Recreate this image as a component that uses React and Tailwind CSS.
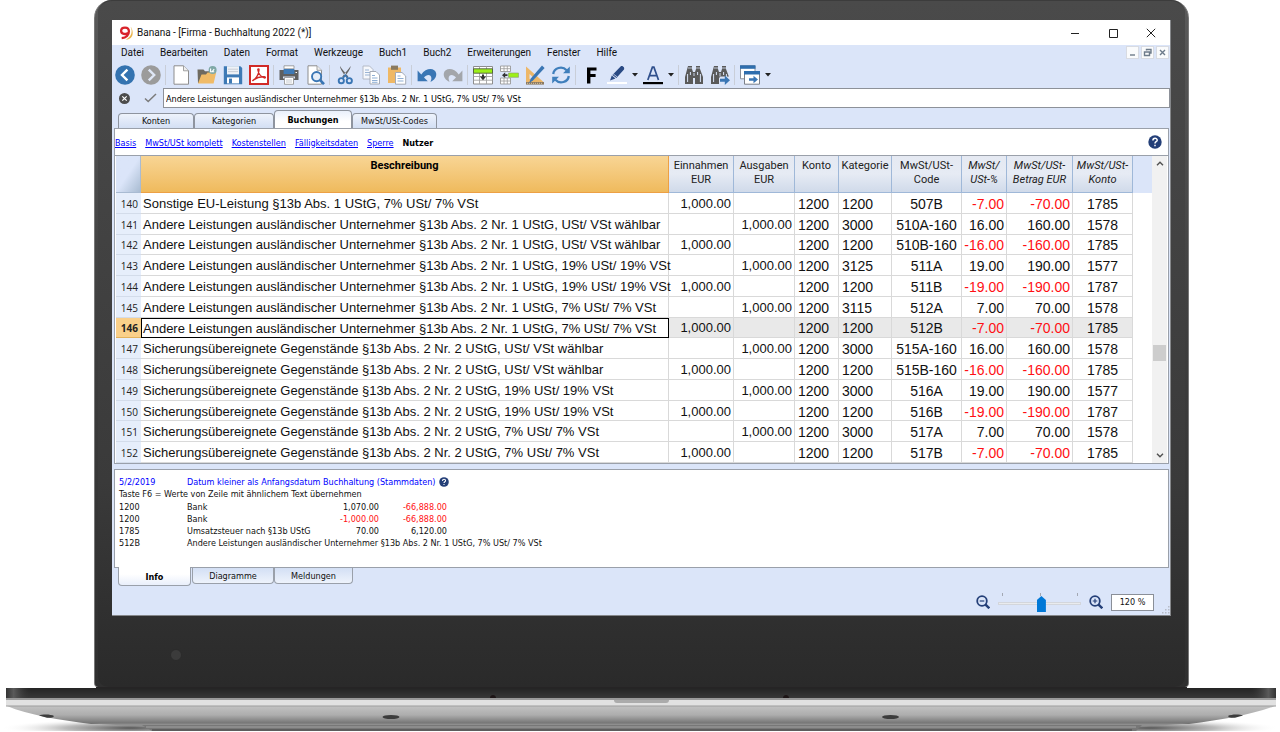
import React from "react";

const HEADERS = [
  { lines: ["Einnahmen", "EUR"] },
  { lines: ["Ausgaben", "EUR"] },
  { lines: ["Konto"] },
  { lines: ["Kategorie"] },
  { lines: ["MwSt/USt-", "Code"] },
  { lines: ["MwSt/", "USt-%"], italic: true },
  { lines: ["MwSt/USt-", "Betrag EUR"], italic: true },
  { lines: ["MwSt/USt-", "Konto"], italic: true },
];

const FOREIGN = "Andere Leistungen ausländischer Unternehmer §13b Abs. 2 Nr. 1 UStG, ";
const SECURED = "Sicherungsübereignete Gegenstände §13b Abs. 2 Nr. 2 UStG, ";

const ROWS = [
  [140, "Sonstige EU-Leistung §13b Abs. 1 UStG, 7% USt/ 7% VSt", "in", "1200", "507B", "-7.00", "-70.00", "1785"],
  [141, FOREIGN + "USt/ VSt wählbar", "out", "3000", "510A-160", "16.00", "160.00", "1578"],
  [142, FOREIGN + "USt/ VSt wählbar", "in", "1200", "510B-160", "-16.00", "-160.00", "1785"],
  [143, FOREIGN + "19% USt/ 19% VSt", "out", "3125", "511A", "19.00", "190.00", "1577"],
  [144, FOREIGN + "19% USt/ 19% VSt", "in", "1200", "511B", "-19.00", "-190.00", "1787"],
  [145, FOREIGN + "7% USt/ 7% VSt", "out", "3115", "512A", "7.00", "70.00", "1578"],
  [146, FOREIGN + "7% USt/ 7% VSt", "in", "1200", "512B", "-7.00", "-70.00", "1785"],
  [147, SECURED + "USt/ VSt wählbar", "out", "3000", "515A-160", "16.00", "160.00", "1578"],
  [148, SECURED + "USt/ VSt wählbar", "in", "1200", "515B-160", "-16.00", "-160.00", "1785"],
  [149, SECURED + "19% USt/ 19% VSt", "out", "3000", "516A", "19.00", "190.00", "1577"],
  [150, SECURED + "19% USt/ 19% VSt", "in", "1200", "516B", "-19.00", "-190.00", "1787"],
  [151, SECURED + "7% USt/ 7% VSt", "out", "3000", "517A", "7.00", "70.00", "1578"],
  [152, SECURED + "7% USt/ 7% VSt", "in", "1200", "517B", "-7.00", "-70.00", "1785"],
];

const SELECTED = 146;

const INFO_ROWS = [
  ["1200", "Bank", "1,070.00", "-66,888.00"],
  ["1200", "Bank", "-1,000.00", "-66,888.00"],
  ["1785", "Umsatzsteuer nach §13b UStG", "70.00", "6,120.00"],
];

const MENUS = ["Datei", "Bearbeiten", "Daten", "Format", "Werkzeuge", "Buch1", "Buch2", "Erweiterungen", "Fenster", "Hilfe"];
const VIEWS = ["Basis", "MwSt/USt komplett", "Kostenstellen", "Fälligkeitsdaten", "Sperre"];

function Icon({ children }) {
  return (
    <svg viewBox="0 0 20 20" className="block size-5" aria-hidden="true">
      {children}
    </svg>
  );
}

function Tool({ label, children }) {
  return (
    <button type="button" aria-label={label} className="block size-5 shrink-0">
      <Icon>{children}</Icon>
    </button>
  );
}

function Sep() {
  return <div className="mx-1 h-5 w-[2px] shrink-0 border-l border-[#c9ced8]" />;
}

function DropArrow({ label, className = "ml-[5px]" }) {
  return (
    <button type="button" aria-label={label} className={"w-[6px] shrink-0 " + className}>
      <svg viewBox="0 0 6 4" className="block h-1 w-[6px]" aria-hidden="true">
        <path d="M0 0h6L3 3.5z" fill="#222" />
      </svg>
    </button>
  );
}

function Group({ children }) {
  return <div className="flex shrink-0 items-center gap-[6px]">{children}</div>;
}

function Binoculars() {
  return (
    <g>
      <path d="M4 1h4v3l1 3v12H1v-7zM12 1h4v3l3 8v7h-8V7l1-3z" fill="#5a5a5a" />
      <path d="M8 7h4v6H8z" fill="#5a5a5a" />
      <path d="M4 3h4M12 3h4" stroke="#dbe5f9" strokeWidth=".8" />
      <path d="M3.6 9v8M6.4 7v3M13.6 7v3M16.4 9v8" stroke="#dbe5f9" strokeWidth="1" />
      <path d="M10 8v3" stroke="#c8d2e6" strokeWidth="1" />
    </g>
  );
}

function Toolbar() {
  return (
    <div className="flex h-[27px] items-center overflow-hidden pl-[3px]">
      <Group>
        <Tool label="Zurück">
          <circle cx="10" cy="10" r="9.8" fill="#3473b0" />
          <path d="M12.4 4.6 7 10l5.4 5.4" fill="none" stroke="#fff" strokeWidth="2.4" />
        </Tool>
        <Tool label="Vorwärts">
          <circle cx="10" cy="10" r="9.8" fill="#9b9b9b" />
          <path d="M7.8 4.6 13.2 10l-5.4 5.4" fill="none" stroke="#dfe7f6" strokeWidth="2.4" />
        </Tool>
      </Group>
      <Sep />
      <Group>
        <Tool label="Neu">
          <path d="M3 .8h9.5l5 5v13.4H3z" fill="#fff" stroke="#8d8d8d" strokeWidth="1" />
          <path d="M12.5.8v5h5" fill="#eee" stroke="#8d8d8d" strokeWidth=".8" />
        </Tool>
        <Tool label="Öffnen">
          <path d="M.5 4.5h6l1.5 1.8h6V18H1z" fill="#6e6a60" />
          <path d="M1 18.6 4.5 9.4H9l1.5-1.8h8.7L16.6 18.6z" fill="#f0bb67" />
          <circle cx="15.6" cy="5" r="4" fill="#7fa8a6" />
          <path d="M13.6 3.4v3.4h3.6M17.2 4.2l-1.8 2.2" stroke="#fff" strokeWidth="1.1" fill="none" />
        </Tool>
        <Tool label="Speichern">
          <path d="M.8 1.2h16.6l1.8 1.8v16.2H.8z" fill="#3d79b5" />
          <path d="M4 1.2h12v8.2H4z" fill="#eef2f7" />
          <path d="M5 4.2h10M5 6.6h10" stroke="#c5cbd3" strokeWidth=".9" />
          <path d="M4 12.4h12v6H4z" fill="#fff" />
          <path d="M6 13.6h3v4.8H6z" fill="#3d79b5" />
        </Tool>
        <Tool label="PDF">
          <path d="M1 1h18v18H1z" fill="#fff" stroke="#d12a27" strokeWidth="2" />
          <path d="M4 15.4c3-1.8 5.6-6 6-10.6.1-1.4-1.4-1.2-1.1.2.6 3.4 3.2 6.8 6.4 7.9 1.4.4 1.5-1 .1-1.100C12 11.500 7.500 12.700 5 14.600c-1 .8-1.600 1.300-1 .8z" fill="none" stroke="#d12a27" strokeWidth="1.4" />
        </Tool>
      </Group>
      <Sep />
      <Group>
        <Tool label="Drucken">
          <path d="M5 .8h10v3H5z" fill="#fff" stroke="#8d8d8d" strokeWidth=".8" />
          <path d="M.5 5h19v10H.5z" fill="#5f5f5f" />
          <path d="M4.6 4h10.8v5H4.6z" fill="#3f7ab6" />
          <path d="M16.5 7.5h1.5" stroke="#fff" strokeWidth="1" />
          <path d="M4 11.5h12v2H4z" fill="#dbe5f9" />
          <path d="M5.5 12.5h9v6.8h-9z" fill="#fff" stroke="#8d8d8d" strokeWidth=".8" />
          <path d="M7 15h6M7 17h6" stroke="#b8bcc4" strokeWidth=".8" />
        </Tool>
        <Tool label="Seitenansicht">
          <path d="M3 .8h9l4.5 4.5v13.900H3z" fill="#fff" stroke="#8d8d8d" strokeWidth="1" />
          <path d="M12 .8v4.5h4.5" fill="#eee" stroke="#8d8d8d" strokeWidth=".8" />
          <circle cx="11.6" cy="11.6" r="4.6" fill="#e6eef8" stroke="#3a76b4" strokeWidth="1.9" />
          <path d="m15 15 4 4.2" stroke="#3a76b4" strokeWidth="2.6" />
        </Tool>
      </Group>
      <Sep />
      <Group>
        <Tool label="Ausschneiden">
          <path d="M5 1c0 3 3 7 6.8 12l1.6-1.2C10 7 6.5 4 5 1zM15.6 1c0 3-3 7-6.8 12l-1.6-1.2C10.6 7 14 4 15.6 1z" fill="#666" />
          <circle cx="6.3" cy="15.7" r="2.6" fill="none" stroke="#3a76b4" strokeWidth="1.9" />
          <circle cx="14.3" cy="15.7" r="2.6" fill="none" stroke="#3a76b4" strokeWidth="1.9" />
          <path d="M7.6 13.6 10.3 10l2.7 3.6" fill="none" stroke="#3a76b4" strokeWidth="1.5" />
        </Tool>
        <Tool label="Kopieren">
          <path d="M2 1h6.5L12 4.5V14H2z" fill="#f6f8fc" stroke="#b4bac6" />
          <path d="M4 5h4M4 7.5h6M4 10h6" stroke="#9ab4d4" />
          <path d="M9 6.5h6l3.5 3.5v9H9z" fill="#fff" stroke="#a4aab6" />
          <path d="M11 10.5h3M11 13h5.5M11 15.500h5.500M11 17.300h5.500" stroke="#8fafd4" />
        </Tool>
        <Tool label="Einfügen">
          <path d="M1 2.5h13V18H1z" fill="#efb865" />
          <path d="M4 .6h7v4.200H4z" fill="#8a7a60" />
          <path d="M8.500 7.500h6.500l3.700 3.500v8.200H8.500z" fill="#fff" stroke="#a4aab6" />
          <path d="M10.500 11h3M10.500 13.500h6M10.500 16h6" stroke="#8fafd4" />
        </Tool>
      </Group>
      <Sep />
      <Group>
        <Tool label="Rückgängig">
          <path d="M.6 5.500v10.700h10.200L7 12.600c2.400-3.400 7.200-3.600 7.400.6 0 1.300-.3 2.400-1 3.600 4-1.600 6.300-4.800 5.800-8.300C18.300 2.600 9 2.300 4.300 9.500z" fill="#3a76b4" />
        </Tool>
        <Tool label="Wiederholen">
          <path d="M19.400 5.500v10.700H9.200l3.800-3.600c-2.400-3.400-7.200-3.600-7.400.6 0 1.300.3 2.400 1 3.600-4-1.600-6.300-4.800-5.800-8.300C1.700 2.600 11 2.300 15.700 9.500z" fill="#a3a6ab" />
        </Tool>
      </Group>
      <Sep />
      <Group>
        <Tool label="Zeilen hinzufügen">
          <path d="M.5 1.500h19v17.500H.5z" fill="#fff" stroke="#8d8d8d" />
          <path d="M.5 11.500h19M.5 15.200h19M6.500 1.500V19M13.500 1.500V19" stroke="#a3a3a3" strokeWidth=".9" />
          <path d="M.5 3.800h19v4.400H.5z" fill="#9cf019" stroke="#4f5b40" strokeWidth=".9" />
          <path d="M9 9.500h2v2h2.200L10 15.200l-3.200-3.700H9z" fill="#333" />
        </Tool>
        <Tool label="Zeile einfügen">
          <path d="M1.500 1h10v5.500h-10zM1.500 13h10v6h-10z" fill="#fff" stroke="#9a9a9a" strokeWidth=".9" />
          <path d="M5 1v5.500M8.300 1v5.500M1.500 3.700h10M5 13v6M8.300 13v6M1.500 16h10" stroke="#9a9a9a" strokeWidth=".8" />
          <path d="M9.500 8h10v4.300h-10z" fill="#9cf019" stroke="#8a9a70" strokeWidth=".6" />
          <path d="M8.500 9.300v1.800H6.200v2L3 10.200 6.200 7.300v2z" fill="#333" />
        </Tool>
        <Tool label="Bearbeiten">
          <path d="M1 1.500 18.500 17H1z" fill="#edb768" />
          <path d="M4.500 9v5h5.500z" fill="#dbe5f9" />
          <path d="M1 17h18v2.600H1z" fill="#8c7a62" />
          <path d="M2 18.300h16" stroke="#d8c8a8" strokeDasharray="1 1" />
          <path d="M17 .6 19.600 3 8 15.400l-4 2.800 1.800-4.600z" fill="#3a76b4" />
        </Tool>
        <Tool label="Aktualisieren">
          <path d="M2.200 9C3 3 11 .2 15.600 5.200M17.800 11c-.8 6-8.800 8.800-13.400 3.800" fill="none" stroke="#3f7fbc" strokeWidth="2.3" />
          <path d="M18.800 1.500v6.800H12zM1.200 18.500v-6.800H8z" fill="#3f7fbc" />
        </Tool>
      </Group>
      <Sep />
      <Group>
        <Tool label="Fett">
          <path d="M6 2.600h9.500v3H9.400v3.300h5.200v3H9.400v6.500H6z" fill="#000" />
        </Tool>
        <Tool label="Hintergrundfarbe">
          <path d="M0 17h20v2H0z" fill="#fff" />
          <path d="M13.600 1.600c1.200-1.600 4.600.8 3.400 2.800L9.400 13l-4-3z" fill="#2a4a84" />
          <path d="m4.800 10.600 3.600 3L3 15.600z" fill="#2a4a84" />
          <path d="m6.300 9 4 3" stroke="#dbe5f9" strokeWidth=".8" />
        </Tool>
      </Group>
      <DropArrow label="Hintergrundfarbe wählen" className="mx-[5px]" />
      <Tool label="Textfarbe">
        <path d="M0 17h20v2.200H0z" fill="#000" />
        <path d="M4.800 15 9.400 2.200h1.500L15.500 15M6.800 10.600h6.700" fill="none" stroke="#2f4f8c" strokeWidth="1.7" />
      </Tool>
      <DropArrow label="Textfarbe wählen" />
      <Sep />
      <Group>
        <Tool label="Suchen">
          <Binoculars />
        </Tool>
        <Tool label="Weitersuchen">
          <Binoculars />
          <path d="M9.500 11.500h10.500v8.500H9.500z" fill="#dbe5f9" />
          <path d="M10 13.800h4.800v-3.400l5.200 4.800-5.200 4.800v-3.200H10z" fill="#3a76b4" />
        </Tool>
      </Group>
      <Sep />
      <Tool label="Fenster wechseln">
        <path d="M.5.8h14.500v13H.5z" fill="#fff" stroke="#8a8f98" />
        <path d="M0 .3h15.500v3.500H0z" fill="#2f6eae" />
        <path d="M4.500 6.800h15v12.400h-15z" fill="#fff" stroke="#7a7f88" />
        <path d="M4 6h16v3.500H4z" fill="#2f6eae" />
        <path d="M9 13.300h4.500v-2.500l4.500 3.700-4.500 3.700v-2.500H9z" fill="#3a76b4" />
      </Tool>
      <DropArrow label="Fensterliste" />
    </div>
  );
}

function Help({ className }) {
  return (
    <button type="button" aria-label="Hilfe" className={className}>
      <svg viewBox="0 0 14 14" className="block size-full" aria-hidden="true">
        <circle cx="7" cy="7" r="6.7" fill="#243f78" />
        <path d="M4.900 5.500c0-3 4.300-2.900 4.300-.3C9.200 6.700 7 6.700 7 8.400M7 9.700v1.500" fill="none" stroke="#fff" strokeWidth="1.5" />
      </svg>
    </button>
  );
}

const CHILD_CONTROLS = [
  ["Fenster minimieren", "M3 8h5"],
  ["Fenster wiederherstellen", "M4.500 3.500v-1h4.500v3.500H8M2.500 5h5v3.500h-5z"],
  ["Fenster schließen", "m3 3 5 5m0-5-5 5"],
];

function Chrome() {
  return (
    <>
      <div className="flex h-[25px] items-center bg-white pl-[7px] font-[Roboto,sans-serif] text-[10px] text-[#111]">
        <svg viewBox="0 0 14 14" className="mr-1 block size-[14px]" aria-hidden="true">
          <path d="M11.500.8c2.200 4 1.600 9.800-4.700 12.700 3.400.5 7-1.900 6.900-6.700-.1-2.700-.9-4.900-2.200-6z" fill="#e9b54d" />
          <path d="M8.900 6.800c-2 1.900-6.700 1.600-6.800-1.900C2.200.6 9.800.3 9.900 5.200c.1 3.600-2.600 6.600-7.200 7" fill="none" stroke="#d8232a" strokeWidth="2.3" />
        </svg>
        <h1 className="grow">Banana - [Firma - Buchhaltung 2022 (*)]</h1>
        <div className="flex items-center gap-7 pr-[14px]">
          <button type="button" aria-label="Minimieren" className="size-[10px]">
            <svg viewBox="0 0 10 10" className="block" aria-hidden="true"><path d="M1 5.500h8" stroke="#222" /></svg>
          </button>
          <button type="button" aria-label="Maximieren" className="size-[10px]">
            <svg viewBox="0 0 10 10" className="block" aria-hidden="true"><path d="M1.500 1.500h8v8h-8z" fill="none" stroke="#222" /></svg>
          </button>
          <button type="button" aria-label="Schließen" className="size-[10px]">
            <svg viewBox="0 0 10 10" className="block" aria-hidden="true"><path d="m.8.8 8.400 8.400M9.200.8.800 9.200" stroke="#222" /></svg>
          </button>
        </div>
      </div>
      <div className="flex h-4 items-start justify-between pr-px pl-[9px]">
        <nav className="flex gap-4 font-[Roboto,sans-serif] text-[10px] leading-4 text-[#111]" aria-label="Menü">
          {MENUS.map((m) => (
            <button type="button" key={m}>{m}</button>
          ))}
        </nav>
        <div className="flex gap-[2px] pt-px">
          {CHILD_CONTROLS.map(([label, d]) => (
            <button type="button" key={label} aria-label={label} className="size-[13px] border border-[#d8dbe2] bg-[#fafbfc]">
              <svg viewBox="0 0 11 11" className="block size-[11px]" aria-hidden="true">
                <path d={d} fill="none" stroke="#6d7b8a" strokeWidth="1.4" />
              </svg>
            </button>
          ))}
        </div>
      </div>
      <Toolbar />
      <div className="flex h-5 items-center">
        <button type="button" aria-label="Abbrechen" className="ml-[7px] size-[11px]">
          <svg viewBox="0 0 11 11" className="block" aria-hidden="true">
            <circle cx="5.5" cy="5.5" r="5.5" fill="#4c4c4c" />
            <path d="m3.300 3.300 4.400 4.400m0-4.400L3.300 7.700" stroke="#fff" strokeWidth="1.2" />
          </svg>
        </button>
        <button type="button" aria-label="Übernehmen" className="ml-[14px] h-[10px] w-[13px]">
          <svg viewBox="0 0 13 10" className="block" aria-hidden="true">
            <path d="m1 5.500 3.200 3L12 1" fill="none" stroke="#7b7b7b" strokeWidth="1.5" />
          </svg>
        </button>
        <input
          aria-label="Zelleninhalt"
          defaultValue={FOREIGN + "7% USt/ 7% VSt"}
          className="ml-[6px] h-5 min-w-0 grow border border-[#8d9199] bg-white px-[2px] pt-px text-[9px] text-black outline-none"
        />
      </div>
    </>
  );
}

function Tabs() {
  const idle = "h-[15px] rounded-t-[4px] border border-b-0 border-[#8e949f] bg-gradient-to-b from-[#eef3fc] to-[#d3dff4]";
  return (
    <div className="flex h-5 items-end pl-[6px] text-[9px] leading-[14px] text-[#111]" role="tablist">
      <button type="button" role="tab" className={idle + " w-[76px]"}>Konten</button>
      <button type="button" role="tab" className={idle + " w-20"}>Kategorien</button>
      <button type="button" role="tab" aria-selected="true" className="h-[18px] w-[78px] rounded-t-[4px] border border-b-0 border-[#8e949f] bg-gradient-to-b from-[#e9effb] to-white to-60% font-bold text-black">
        Buchungen
      </button>
      <button type="button" role="tab" className={idle + " w-[85px]"}>MwSt/USt-Codes</button>
    </div>
  );
}

const numberClass = (value) => (value.startsWith("-") ? "text-[#ff0f14]" : "");

function Ledger() {
  return (
    <div className="flex border-t border-[#9aa0aa] pl-px">
      <table className="h-[307px] w-[1017px] table-fixed border-separate border-spacing-0 font-['Liberation_Sans',Arial,sans-serif] text-[14px] leading-4 text-[#111]">
        <colgroup>
          <col className="w-[25px]" />
          <col />
          <col className="w-[65px]" />
          <col className="w-[61px]" />
          <col className="w-[44px]" />
          <col className="w-[53px]" />
          <col className="w-[70px]" />
          <col className="w-[45px]" />
          <col className="w-[66px]" />
          <col className="w-[60px]" />
        </colgroup>
        <thead>
          <tr className="h-[37px] font-[Roboto,sans-serif] text-[11px] leading-[14px]">
            <td className="border-r border-b border-[#a9bbd2] bg-gradient-to-br from-[#dbe5f9] from-50% to-[#a9bcd2] p-0" />
            <th className="border-r border-b border-[#eda044] bg-gradient-to-b from-[#f8d594] to-[#efba5c] p-0 pt-[3px] align-top font-bold text-black">
              Beschreibung
            </th>
            {HEADERS.map((h, i) => (
              <th
                key={i}
                className={
                  "border-r border-b border-[#9fb8d8] bg-gradient-to-b from-[#e5e9f2] via-[#e6ebf4] to-[#d0daea] p-0 pt-[3px] align-top font-normal whitespace-nowrap text-[#222] " +
                  (h.italic ? "italic" : "")
                }
              >
                {h.lines.map((l) => (
                  <div key={l}>{l}</div>
                ))}
              </th>
            ))}
          </tr>
        </thead>
        <tbody>
          {ROWS.map(([no, text, side, category, code, rate, amount, account]) => {
            const on = no === SELECTED;
            const cell = "border-r border-b border-[#d9d9d9] pt-[2px] pb-0 whitespace-nowrap " + (on ? "bg-[#e9e9e9]" : "bg-white");
            return (
              <tr key={no} aria-selected={on}>
                <th
                  scope="row"
                  className={
                    "border-b p-0 pt-[2px] pr-[3px] text-right font-['Open_Sans',sans-serif] text-[10px] text-[#222] " +
                    (on ? "border-[#e3b25c] bg-[#fad08a] font-bold" : "border-[#d3dcea] bg-[#e6eefb] font-normal")
                  }
                >
                  {no}
                </th>
                <td
                  className={
                    "pt-[2px] pb-0 pl-[2px] text-[13px] whitespace-nowrap " +
                    (on ? "bg-white outline outline-1 -outline-offset-1 outline-black" : "border-r border-b border-[#d9d9d9] bg-white")
                  }
                >
                  {text}
                </td>
                <td className={cell + " pr-[2px] text-right text-[13px]"}>{side === "in" ? "1,000.00" : ""}</td>
                <td className={cell + " pr-[2px] text-right text-[13px]"}>{side === "out" ? "1,000.00" : ""}</td>
                <td className={cell + " pl-[3px]"}>1200</td>
                <td className={cell + " pl-[3px]"}>{category}</td>
                <td className={cell + " px-0 text-center"}>{code}</td>
                <td className={cell + " pr-[2px] text-right " + numberClass(rate)}>{rate}</td>
                <td className={cell + " pr-[2px] text-right " + numberClass(amount)}>{amount}</td>
                <td className={cell + " px-0 text-center"}>{account}</td>
              </tr>
            );
          })}
        </tbody>
      </table>
      <div className="grow">
        <div className="h-[37px] bg-[#dbe5f9]" />
      </div>
      <div className="mr-px flex w-[15px] flex-col items-center justify-between bg-[#f1f1f1]">
        <button type="button" aria-label="Nach oben" className="flex h-[15px] w-full items-center justify-center">
          <svg viewBox="0 0 8 5" className="h-[5px] w-2" aria-hidden="true"><path d="m1 4.300 3-3 3 3" fill="none" stroke="#505050" strokeWidth="1.4" /></svg>
        </button>
        <div className="flex w-full grow flex-col items-center">
          <div className="grow-[174]" />
          <div className="h-4 w-[13px] bg-[#cdcdcd]" />
          <div className="grow-[87]" />
        </div>
        <button type="button" aria-label="Nach unten" className="flex h-[15px] w-full items-center justify-center">
          <svg viewBox="0 0 8 5" className="h-[5px] w-2" aria-hidden="true"><path d="m1 .7 3 3 3-3" fill="none" stroke="#505050" strokeWidth="1.4" /></svg>
        </button>
      </div>
    </div>
  );
}

function InfoPanel() {
  return (
    <section className="mt-[5px] mr-px ml-[2px] h-[99px] border border-[#9aa0aa] bg-white pt-[5px] pl-1 text-[9px] leading-3 text-[#111]">
      <div className="flex h-[13px] items-center text-[#0000ff]">
        <span className="w-[68px]">5/2/2019</span>
        <span>Datum kleiner als Anfangsdatum Buchhaltung (Stammdaten)</span>
        <Help className="ml-[3px] size-[10px]" />
      </div>
      <p className="h-[13px]">Taste F6 = Werte von Zeile mit ähnlichem Text übernehmen</p>
      <table className="table-fixed border-collapse text-left">
        <colgroup>
          <col className="w-[68px]" />
          <col className="w-[124px]" />
          <col className="w-[68px]" />
          <col className="w-[68px]" />
          <col className="w-[100px]" />
        </colgroup>
        <tbody>
          {INFO_ROWS.map((r, i) => (
            <tr key={i}>
              <td className="p-0">{r[0]}</td>
              <td className="p-0 whitespace-nowrap">{r[1]}</td>
              <td className={"p-0 text-right " + numberClass(r[2])}>{r[2]}</td>
              <td className={"p-0 text-right " + numberClass(r[3])}>{r[3]}</td>
            </tr>
          ))}
          <tr>
            <td className="p-0">512B</td>
            <td className="p-0 whitespace-nowrap" colSpan={4}>{FOREIGN}7% USt/ 7% VSt</td>
          </tr>
        </tbody>
      </table>
    </section>
  );
}

function Footer() {
  const idle = "h-4 rounded-b-[4px] border border-t-0 border-[#9aa0aa] bg-gradient-to-b from-[#d3dff4] to-[#eef3fc]";
  return (
    <footer className="flex h-[47px] flex-col justify-between text-[9px] leading-[14px] text-[#111]">
      <div className="flex items-start pl-[6px]" role="tablist">
        <button type="button" role="tab" aria-selected="true" className="-mt-px h-[19px] w-[73px] rounded-b-[4px] border border-t-0 border-[#9aa0aa] bg-gradient-to-t from-[#e9effb] to-white to-60% pt-px font-bold text-black">
          Info
        </button>
        <button type="button" role="tab" className={idle + " ml-px w-[82px]"}>Diagramme</button>
        <button type="button" role="tab" className={idle + " w-[79px]"}>Meldungen</button>
      </div>
      <div className="flex items-center justify-end pb-px">
        <button type="button" aria-label="Verkleinern" className="size-[14px]">
          <svg viewBox="0 0 14 14" className="block" aria-hidden="true">
            <circle cx="6" cy="6" r="4.8" fill="none" stroke="#243f78" strokeWidth="1.8" />
            <path d="M3.700 6h4.600" stroke="#243f78" strokeWidth="1.2" />
            <path d="m9.300 9.300 4 4" stroke="#243f78" strokeWidth="2.4" />
          </svg>
        </button>
        <div className="mx-2 flex w-[83px] flex-col">
          <div className="flex h-[3px] justify-between pr-[3px] pl-1">
            <span className="w-px bg-[#a3a8b3]" />
            <span className="w-px bg-[#a3a8b3]" />
            <span className="w-px bg-[#a3a8b3]" />
          </div>
          <input
            type="range"
            aria-label="Zoom"
            min="20"
            max="210"
            defaultValue="120"
            className="h-4 w-full appearance-none bg-transparent [&::-webkit-slider-runnable-track]:h-[3px] [&::-webkit-slider-runnable-track]:border [&::-webkit-slider-runnable-track]:border-[#d3d6dc] [&::-webkit-slider-runnable-track]:bg-[#e9ebee] [&::-webkit-slider-thumb]:-mt-[7px] [&::-webkit-slider-thumb]:h-4 [&::-webkit-slider-thumb]:w-[9px] [&::-webkit-slider-thumb]:appearance-none [&::-webkit-slider-thumb]:bg-[#0078d7] [&::-webkit-slider-thumb]:[clip-path:polygon(50%_0,100%_25%,100%_100%,0_100%,0_25%)]"
          />
        </div>
        <button type="button" aria-label="Vergrößern" className="size-[14px]">
          <svg viewBox="0 0 14 14" className="block" aria-hidden="true">
            <circle cx="6" cy="6" r="4.8" fill="none" stroke="#243f78" strokeWidth="1.8" />
            <path d="M3.700 6h4.600M6 3.700v4.600" stroke="#243f78" strokeWidth="1.2" />
            <path d="m9.300 9.300 4 4" stroke="#243f78" strokeWidth="2.4" />
          </svg>
        </button>
        <input aria-label="Zoomfaktor" defaultValue="120 %" className="ml-2 h-[17px] w-[43px] border border-[#8a8f98] bg-white text-center text-[9px] outline-none" />
        <svg viewBox="0 0 8 8" className="mt-4 ml-2 size-2" aria-hidden="true">
          <path d="M6 0h1.500v1.500H6zM3 3h1.500v1.500H3zM6 3h1.500v1.500H6zM0 6h1.500v1.500H0zM3 6h1.500v1.500H3zM6 6h1.500v1.500H6z" fill="#b7bcc7" />
        </svg>
      </div>
    </footer>
  );
}

function LaptopBase() {
  return (
    <svg viewBox="0 0 1280 45" preserveAspectRatio="none" className="block h-[45px] w-full" aria-hidden="true">
      <defs>
        <linearGradient id="deck" x1="0" y1="0" x2="0" y2="1">
          <stop offset="0" stopColor="#242424" />
          <stop offset="1" stopColor="#3a3a3a" />
        </linearGradient>
        <linearGradient id="deckEdge" x1="0" y1="0" x2="1" y2="0">
          <stop offset="0" stopColor="#333" />
          <stop offset=".006" stopColor="#5a5a5a" />
          <stop offset=".02" stopColor="#333" stopOpacity="0" />
          <stop offset=".98" stopColor="#333" stopOpacity="0" />
          <stop offset=".994" stopColor="#5a5a5a" />
          <stop offset="1" stopColor="#333" />
        </linearGradient>
        <linearGradient id="belly" x1="0" y1="0" x2="0" y2="1">
          <stop offset="0" stopColor="#c2c2c2" />
          <stop offset=".5" stopColor="#adadad" />
          <stop offset="1" stopColor="#6f6f6f" />
        </linearGradient>
        <radialGradient id="shade">
          <stop offset="0" stopColor="#444" stopOpacity=".9" />
          <stop offset=".5" stopColor="#777" stopOpacity=".5" />
          <stop offset="1" stopColor="#fff" stopOpacity="0" />
        </radialGradient>
      </defs>
      <ellipse cx="130" cy="41" rx="130" ry="9" fill="url(#shade)" />
      <ellipse cx="1150" cy="41" rx="130" ry="9" fill="url(#shade)" />
      <path d="M0 44h1280v1H0z" fill="#fff" />
      <path d="M96 0h1091v2H96z" fill="#262425" />
      <path d="M6 1h1270v11H6z" fill="url(#deck)" />
      <path d="M6 1h1270v11H6z" fill="url(#deckEdge)" />
      <path d="M7 19h1268c-24 9-54 14-86 18H91C60 33 28 28 7 19z" fill="url(#belly)" />
      <path d="M91 36.500h1098l-45 3H142z" fill="#8e8e8e" />
      <path d="M142 38h1000l-6 6H152z" fill="#777" />
      <path d="M146 40h990" stroke="#a2a2a2" />
      <path d="M152 43h980" stroke="#555" strokeWidth="1.4" />
      <path d="M6 11h1270v2H6z" fill="#9a9a9a" />
      <path d="M6 13h1270v6H6z" fill="#e1e1e1" />
      <path d="M6 19h1270" stroke="#9d9d9d" strokeWidth="1" />
      <path d="M614 13h55c0 2-1 3-3 3h-49c-2 0-3-1-3-3z" fill="#ababab" />
      <path d="M490 11c0-4 6-4 6 0zM783 11c0-4 6-4 6 0z" fill="#1d1516" />
      <ellipse cx="391" cy="30" rx="8.5" ry="2" fill="#3c3c3c" />
      <ellipse cx="890.5" cy="30" rx="8.5" ry="2" fill="#3c3c3c" />
      <path d="M39 28.500c3-1.500 12-1.500 15 .5-1 2-5 2-7 1.700zM1243 28.500c-3-1.500-12-1.500-15 .5 1 2 5 2 7 1.700z" fill="#3c3c3c" />
    </svg>
  );
}

export default function App() {
  return (
    <main className="min-h-screen w-full overflow-hidden bg-white font-['DejaVu_Sans_Condensed','Open_Sans',sans-serif]">
      <div className="mr-[91px] ml-[94px] rounded-t-[18px] rounded-b-[4px] border-x border-[#777] bg-gradient-to-b from-[#5a5a5a] via-[#3d3d3d] to-[#2f2f2f]">
        <div className="mx-[3px] rounded-t-[14px] rounded-b-[10px] border-t border-[#3c3c3c] bg-gradient-to-b from-[#4a4a4a] from-0% via-[#3a3a3a] via-70% to-[#2a2a2a] px-[14px] pt-[19px]">
          <div className="border border-t-0 border-l-0 border-[#85878a] bg-[#dbe5f9]">
            <Chrome />
            <Tabs />
            <section className="mr-px ml-[2px] border border-[#9aa0aa] bg-white">
              <div className="flex h-[26px] items-center justify-between pr-[6px]">
                <nav className="flex gap-[9px] pt-px text-[9px] leading-3" aria-label="Ansichten">
                  {VIEWS.map((v) => (
                    <a key={v} href="#ansicht" className="text-[#0000ff] underline">{v}</a>
                  ))}
                  <strong className="text-black">Nutzer</strong>
                </nav>
                <Help className="size-[14px]" />
              </div>
              <Ledger />
            </section>
            <InfoPanel />
            <Footer />
          </div>
          <div className="h-[71px] pt-[33px] pl-[58px]">
            <div className="size-3 rounded-full border border-[#2b2b2b] bg-[#3b3b3b]" />
          </div>
        </div>
      </div>
      <LaptopBase />
    </main>
  );
}
